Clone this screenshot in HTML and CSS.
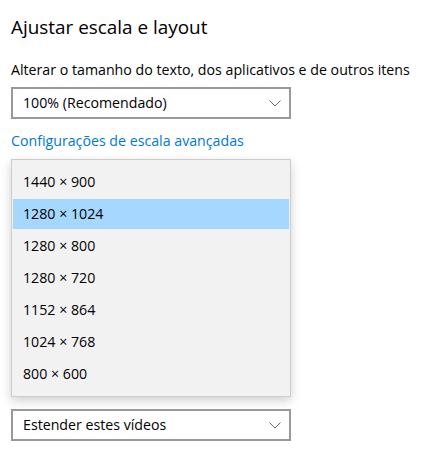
FILE: index.html
```html
<!DOCTYPE html>
<html lang="pt-BR">
<head>
<meta charset="utf-8">
<title>Ajustar escala e layout</title>
<link rel="stylesheet" href="styles.css">
</head>
<body>
<main class="page">
  <h1 class="title">Ajustar escala e layout</h1>
  <p class="label">Alterar o tamanho do texto, dos aplicativos e de outros itens</p>
  <div class="select select-scale">
    <span class="select-text">100% (Recomendado)</span>
    <svg class="chevron" width="12" height="7" viewBox="0 0 12 7"><path d="M0.5 0.5 L6 6 L11.5 0.5" fill="none" stroke="#6b6b6b" stroke-width="1"/></svg>
  </div>
  <a class="link" href="#">Configurações de escala avançadas</a>
  <ul class="listbox">
    <li class="option">1440 × 900</li>
    <li class="option selected">1280 × 1024</li>
    <li class="option">1280 × 800</li>
    <li class="option">1280 × 720</li>
    <li class="option">1152 × 864</li>
    <li class="option">1024 × 768</li>
    <li class="option">800 × 600</li>
  </ul>
  <div class="select select-displays">
    <span class="select-text">Estender estes vídeos</span>
    <svg class="chevron" width="12" height="7" viewBox="0 0 12 7"><path d="M0.5 0.5 L6 6 L11.5 0.5" fill="none" stroke="#6b6b6b" stroke-width="1"/></svg>
  </div>
</main>
</body>
</html>
```
FILE: styles.css
```css
html, body {
  margin: 0;
  padding: 0;
  background: #ffffff;
}
body {
  font-family: "Open Sans", "Noto Sans", sans-serif;
  color: #000000;
  font-size: 14.2px;
}
.page {
  padding: 14px 0 0 11px;
  display: flex;
  flex-direction: column;
  align-items: flex-start;
}
.title {
  margin: 0;
  font-size: 18.9px;
  font-weight: 400;
  line-height: 26px;
}
.label {
  margin: 20px 0 0 0;
  font-size: 14.2px;
  line-height: 20px;
}
.select {
  box-sizing: border-box;
  width: 280px;
  height: 32px;
  border: 2px solid #999999;
  background: #ffffff;
  display: flex;
  align-items: center;
  justify-content: space-between;
  padding: 0 8px 0 10px;
}
.select-text {
  font-size: 14.2px;
  line-height: 28px;
}
.chevron {
  display: block;
}
.select-scale {
  margin-top: 7px;
}
.link {
  margin-top: 12px;
  font-size: 14.2px;
  line-height: 20px;
  color: #0078d7;
  text-decoration: none;
}
.listbox {
  box-sizing: border-box;
  width: 280px;
  margin: 8px 0 0 0;
  padding: 6px 1px;
  list-style: none;
  background: #f2f2f2;
  border: 1px solid #cccccc;
  box-shadow: 0 4px 10px rgba(0, 0, 0, 0.18);
  display: flex;
  flex-direction: column;
}
.option {
  margin: 1px 0;
  height: 30px;
  line-height: 30px;
  padding-left: 10px;
  font-size: 14.2px;
}
.option.selected {
  background: #a6d8ff;
}
.select-displays {
  margin-top: 12px;
}
```
